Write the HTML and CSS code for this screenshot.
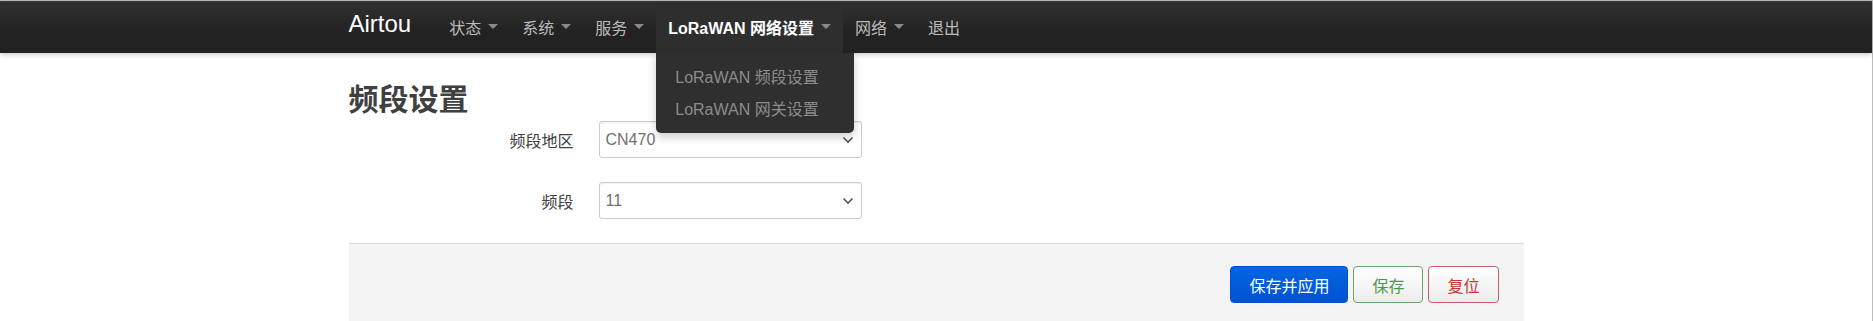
FILE: index.html
```html
<!DOCTYPE html>
<html lang="zh-CN">
<head>
    <meta charset="UTF-8"/>
    <meta name="viewport" content="width=device-width, initial-scale=1.0"/>
    <title>频段设置 - Airtou</title>
    <link rel="stylesheet" href="styles.css">
</head>
<body>
<div class="page">
    <header class="navbar">
        <div class="container nav-inner">
            <a class="brand" href="#">Airtou</a>
            <ul class="nav">
                <li><a href="#">状态<span class="caret"></span></a></li>
                <li><a href="#">系统<span class="caret"></span></a></li>
                <li><a href="#">服务<span class="caret"></span></a></li>
                <li class="open">
                    <a class="active" href="#">LoRaWAN 网络设置<span class="caret"></span></a>
                    <ul class="dropdown">
                        <li><a href="#">LoRaWAN 频段设置</a></li>
                        <li><a href="#">LoRaWAN 网关设置</a></li>
                    </ul>
                </li>
                <li><a href="#">网络<span class="caret"></span></a></li>
                <li><a href="#">退出</a></li>
            </ul>
        </div>
    </header>

    <main class="container">
        <h1>频段设置</h1>
        <form class="cbi-form">
            <div class="row">
                <label for="region">频段地区</label>
                <div class="select-wrap">
                    <select id="region">
                        <option>CN470</option>
                        <option>EU868</option>
                        <option>US915</option>
                    </select>
                    <svg class="chevron" width="12" height="8" viewBox="0 0 12 8"><path d="M1.5 1.5 L6 6 L10.5 1.5" fill="none" stroke="#555" stroke-width="1.6"/></svg>
                </div>
            </div>
            <div class="row">
                <label for="band">频段</label>
                <div class="select-wrap">
                    <select id="band">
                        <option>11</option>
                        <option>12</option>
                    </select>
                    <svg class="chevron" width="12" height="8" viewBox="0 0 12 8"><path d="M1.5 1.5 L6 6 L10.5 1.5" fill="none" stroke="#555" stroke-width="1.6"/></svg>
                </div>
            </div>
        </form>

        <div class="actions">
            <button class="btn btn-apply" type="button">保存并应用</button>
            <button class="btn btn-save" type="button">保存</button>
            <button class="btn btn-reset" type="button">复位</button>
        </div>
    </main>
</div>
</body>
</html>
```

FILE: styles.css
```css
html, body {
    margin: 0;
    padding: 0;
}

body {
    font-family: "Liberation Sans", "Noto Sans CJK SC", sans-serif;
    font-size: 16px;
    color: #404040;
    background: #fff;
}

.page {
    min-height: 100vh;
    box-sizing: border-box;
    border-top: 1px solid #c4c4c4;
    border-right: 1px solid #bdbdbd;
}

.container {
    width: 1175px;
    margin: 0 auto;
}

/* barre de navigation */
.navbar {
    height: 51px;
    background: linear-gradient(#303030, #222 60%, #222);
    border-top: 1px solid #3a3a3a;
    box-shadow: 0 1px 6px rgba(0, 0, 0, 0.25);
    position: relative;
    z-index: 10;
}

.nav-inner {
    display: flex;
    align-items: stretch;
    height: 51px;
}

.brand {
    font-size: 24px;
    color: #fff;
    text-decoration: none;
    line-height: 44px;
    margin-right: 26px;
}

.nav {
    display: flex;
    list-style: none;
    margin: 0;
    padding: 0;
}

.nav > li {
    position: relative;
}

.nav > li > a {
    display: flex;
    align-items: center;
    height: 100%;
    padding: 0 12px 2px;
    box-sizing: border-box;
    color: #bbb;
    text-decoration: none;
}

.nav > li > a.active {
    color: #fff;
    font-weight: bold;
    background: #2e2e2e;
}

.caret {
    display: inline-block;
    width: 0;
    height: 0;
    margin-left: 7px;
    border-left: 5px solid transparent;
    border-right: 5px solid transparent;
    border-top: 5px solid #8a8a8a;
}

.dropdown {
    position: absolute;
    top: 100%;
    left: 0;
    min-width: 198px;
    list-style: none;
    margin: 0;
    padding: 9px 0 7px;
    background: #2f2f2f;
    border-radius: 0 0 5px 5px;
    box-shadow: 0 4px 10px rgba(0, 0, 0, 0.2);
}

.dropdown a {
    display: block;
    padding: 0 19px;
    line-height: 32px;
    color: #8c8c8c;
    text-decoration: none;
    white-space: nowrap;
}

/* contenu */
h1 {
    font-size: 30px;
    font-weight: bold;
    color: #404040;
    margin: 0;
    padding-top: 29px;
    line-height: 36px;
}

.cbi-form {
    margin-top: 3px;
}

.row {
    display: grid;
    grid-template-columns: 225px 263px;
    column-gap: 25px;
    align-items: center;
    margin-bottom: 24px;
}

.row label {
    text-align: right;
    color: #404040;
}

.select-wrap {
    position: relative;
}

.select-wrap select {
    display: block;
    width: 100%;
    height: 37px;
    padding: 0 6px;
    font-family: inherit;
    font-size: 16px;
    color: #707070;
    background: #fff;
    border: 1px solid #ccc;
    border-radius: 3px;
    box-shadow: inset 0 1px 1px rgba(0, 0, 0, 0.06);
    appearance: none;
    -webkit-appearance: none;
}

.chevron {
    position: absolute;
    right: 8px;
    top: 15px;
    pointer-events: none;
}

.actions {
    display: flex;
    justify-content: flex-end;
    gap: 5px;
    margin-top: 0;
    padding: 22px 25px 22px;
    background: #f4f4f4;
    border-top: 1px solid #ddd;
}

.btn {
    height: 37px;
    padding: 0 18px;
    font-family: inherit;
    font-size: 16px;
    border-radius: 4px;
    cursor: pointer;
}

.btn-apply {
    color: #fff;
    background: linear-gradient(#0466e0, #0052d4);
    border: 1px solid #0050c8;
}

.btn-save {
    color: #4b9a4b;
    background: linear-gradient(#fff, #ececec);
    border: 1px solid #6aa56a;
}

.btn-reset {
    color: #c33;
    background: linear-gradient(#fff, #ececec);
    border: 1px solid #c96060;
}
```
